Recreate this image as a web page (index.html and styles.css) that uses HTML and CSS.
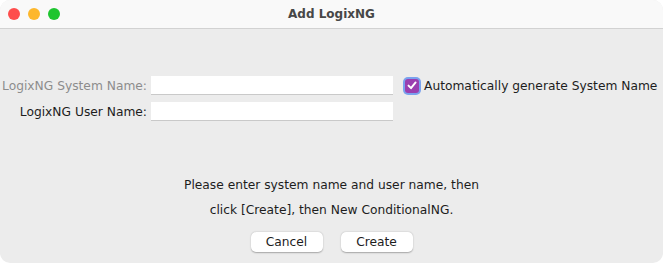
FILE: index.html
```html
<!DOCTYPE html>
<html>
<head>
    <meta charset="UTF-8" />
    <title>Add LogixNG</title>
    <link rel="stylesheet" href="styles.css">
</head>
<body>
<div class="window">
    <!-- title bar -->
    <header class="titlebar">
        <div class="lights">
            <span class="light close"></span>
            <span class="light minimize"></span>
            <span class="light zoom"></span>
        </div>
        <div class="title">Add LogixNG</div>
        <div></div>
    </header>

    <!-- name fields -->
    <main class="content">
        <div class="form">
            <label class="field-label disabled" for="system-name">LogixNG System Name:</label>
            <input type="text" id="system-name" class="text-field" disabled>
            <label class="auto-check">
                <span class="checkbox">
                    <svg width="10" height="9" viewBox="0 0 10 9"><path d="M1.5 4.6 L4 7.2 L8.6 1.4" fill="none" stroke="#fff" stroke-width="1.9" stroke-linecap="round" stroke-linejoin="round"/></svg>
                </span>
                Automatically generate System Name
            </label>

            <label class="field-label" for="user-name">LogixNG User Name:</label>
            <input type="text" id="user-name" class="text-field">
            <div></div>
        </div>

        <div class="message">
            <p>Please enter system name and user name, then</p>
            <p>click [Create], then New ConditionalNG.</p>
        </div>

        <div class="buttons">
            <button class="btn">Cancel</button>
            <button class="btn">Create</button>
        </div>
    </main>
</div>
</body>
</html>
```

FILE: styles.css
```css
html,
body {
 margin: 0;
 background-color: #ffffff;
}

body {
 font-family: "DejaVu Sans", "Liberation Sans", sans-serif;
 font-size: 12.25px;
 color: #1d1d1d;
}

.window {
 width: 663px;
 height: 263px;
 background-color: #ececec;
 border-radius: 10px;
 overflow: hidden;
 display: flex;
 flex-direction: column;
}

.titlebar {
 height: 28px;
 flex: none;
 background-color: #f9f9f9;
 border-bottom: 1px solid #d2d2d2;
 display: grid;
 grid-template-columns: 1fr auto 1fr;
 align-items: center;
}

.lights {
 display: flex;
 gap: 8px;
 padding-left: 8px;
}

.light {
 width: 12px;
 height: 12px;
 border-radius: 50%;
}

.close {
 background-color: #fe4d4c;
}

.minimize {
 background-color: #fdb72c;
}

.zoom {
 background-color: #1ec52f;
}

.title {
 font-weight: bold;
 font-size: 12px;
 color: #474747;
}

.content {
 flex: 1;
 display: flex;
 flex-direction: column;
}

.form {
 margin-top: 47px;
 display: grid;
 grid-template-columns: 147px 242px auto;
 grid-auto-rows: 19px;
 row-gap: 7px;
 column-gap: 4px;
 align-items: center;
}

.field-label {
 text-align: right;
 white-space: nowrap;
}

.field-label.disabled {
 color: #8c8c8c;
}

.text-field {
 height: 19px;
 box-sizing: border-box;
 margin: 0;
 padding: 0 4px;
 border: none;
 border-bottom: 1px solid #c9c9c9;
 background-color: #ffffff;
 font: inherit;
}

.auto-check {
 display: flex;
 align-items: center;
 gap: 5px;
 margin-left: 8px;
 white-space: nowrap;
}

.checkbox {
 width: 14px;
 height: 14px;
 border-radius: 3px;
 background-color: #9a3fb0;
 box-shadow: 0 0 0 2px #7aa2ee;
 display: flex;
 align-items: center;
 justify-content: center;
}

.message {
 margin-top: 52px;
 text-align: center;
}

.message p {
 margin: 0;
 line-height: 25px;
}

.buttons {
 margin-top: 9px;
 display: flex;
 justify-content: center;
 gap: 18px;
}

.btn {
 width: 72px;
 height: 20px;
 padding: 0;
 border: none;
 border-radius: 5px;
 background-color: #ffffff;
 box-shadow: 0 0.5px 1.5px rgba(0, 0, 0, 0.3);
 font: inherit;
 color: #1d1d1d;
}
```
